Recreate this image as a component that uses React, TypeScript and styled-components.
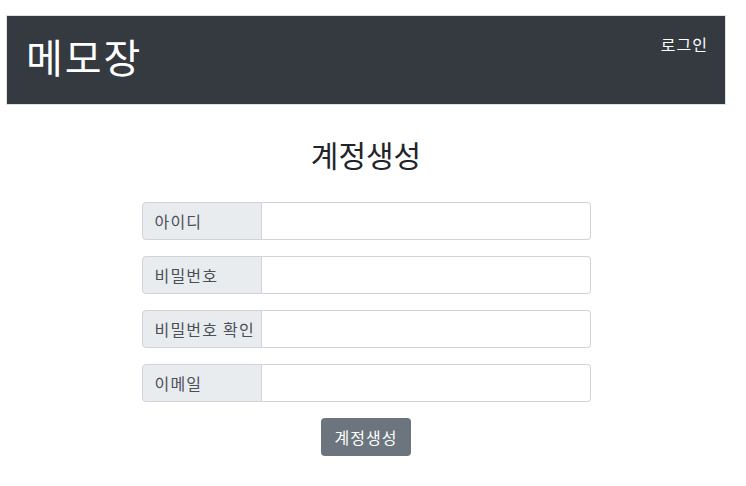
import React from 'react';
import styled, { createGlobalStyle } from 'styled-components';

const GlobalStyle = createGlobalStyle`
    body {
        margin: 0;
        background: #ffffff;
        font-family: "Noto Sans CJK KR", "Noto Sans", sans-serif;
        color: #212529;
    }
`;

const Page = styled.div`
    width: 720px;
    margin: 15px 0 0 6px;
`;

const Navbar = styled.header`
    display: flex;
    justify-content: space-between;
    align-items: flex-start;
    height: 88px;
    background: #343a40;
    border: 1px solid #dee2e6;
    padding: 0 17px 0 19px;
`;

const Brand = styled.div`
    color: #ffffff;
    font-size: 40px;
    line-height: 48px;
    letter-spacing: 2px;
    margin-top: 16px;
`;

const NavLink = styled.a`
    color: #ffffff;
    font-size: 16px;
    line-height: 20px;
    letter-spacing: 1px;
    margin-top: 18px;
    text-decoration: none;
`;

const Main = styled.main`
    display: flex;
    flex-direction: column;
    align-items: center;
`;

const Title = styled.h2`
    margin: 31px 0 30px;
    font-size: 30px;
    font-weight: 400;
    line-height: 36px;
    color: #212529;
`;

const Form = styled.form`
    display: flex;
    flex-direction: column;
    align-items: center;
    gap: 16px;
    width: 449px;
`;

const InputGroup = styled.div`
    display: flex;
    width: 100%;
    height: 38px;
`;

const Addon = styled.label`
    display: flex;
    align-items: center;
    box-sizing: border-box;
    width: 120px;
    padding-left: 12px;
    background: #e9ecef;
    border: 1px solid #ced4da;
    border-radius: 4px 0 0 4px;
    color: #495057;
    font-size: 16px;
    letter-spacing: 1.2px;
    white-space: nowrap;
    overflow: hidden;
`;

const Input = styled.input`
    flex: 1;
    box-sizing: border-box;
    height: 38px;
    border: 1px solid #ced4da;
    border-left: none;
    border-radius: 0 4px 4px 0;
    padding: 0 12px;
    font-size: 16px;
    font-family: inherit;
    outline: none;
`;

const Button = styled.button`
    width: 90px;
    height: 38px;
    background: #6c757d;
    border: none;
    border-radius: 4px;
    color: #ffffff;
    font-size: 16px;
    letter-spacing: 1px;
    font-family: inherit;
`;

const fields = [
    { label: '아이디', type: 'text' },
    { label: '비밀번호', type: 'password' },
    { label: '비밀번호 확인', type: 'password' },
    { label: '이메일', type: 'email' },
];

export default function App() {
    return (
        <>
            <GlobalStyle />
            <Page>
                <Navbar>
                    <Brand>메모장</Brand>
                    <NavLink href="#">로그인</NavLink>
                </Navbar>
                <Main>
                    <Title>계정생성</Title>
                    <Form onSubmit={e => e.preventDefault()}>
                        {fields.map(f => (
                            <InputGroup key={f.label}>
                                <Addon>{f.label}</Addon>
                                <Input type={f.type} />
                            </InputGroup>
                        ))}
                        <Button type="submit">계정생성</Button>
                    </Form>
                </Main>
            </Page>
        </>
    );
}
